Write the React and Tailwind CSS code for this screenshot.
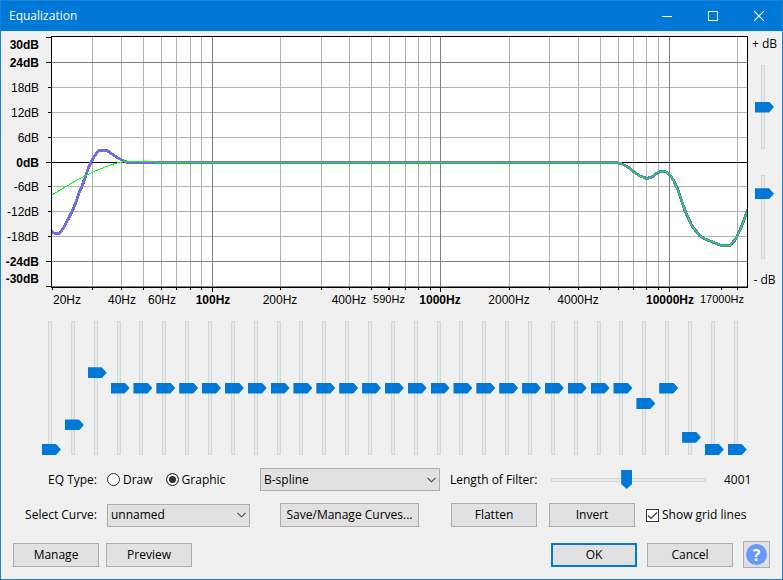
import { useState } from "react";

const BANDS = [
  20, 25, 31, 40, 50, 63, 80, 100, 125, 160, 200, 250, 315, 400, 500, 630, 800,
  1000, 1250, 1600, 2000, 2500, 3150, 4000, 5000, 6300, 8000, 10000, 12500,
  16000, 20000,
];
const GAINS = [
  -20, -12, 5, 0, 0, 0, 0, 0, 0, 0, 0, 0, 0, 0, 0, 0, 0, 0, 0, 0, 0, 0, 0, 0, 0,
  0, -5, 0, -16, -20, -20,
];

const V_LINES = [
  92, 121, 143, 161, 176, 190, 201, 280, 321, 349, 371, 389, 405, 418, 430, 509,
  549, 578, 600, 618, 633, 646, 658, 737,
];
const V_MAJOR = [212, 440, 669];
const H_LINES = [87, 112, 137, 186, 211, 236];
const H_MAJOR = [62, 261, 286];

const DB_LABELS = [
  { text: "30dB", y: 49, bold: true },
  { text: "24dB", y: 67, bold: true },
  { text: "18dB", y: 92 },
  { text: "12dB", y: 117 },
  { text: "6dB", y: 142 },
  { text: "0dB", y: 167, bold: true },
  { text: "-6dB", y: 191 },
  { text: "-12dB", y: 216 },
  { text: "-18dB", y: 241 },
  { text: "-24dB", y: 266, bold: true },
  { text: "-30dB", y: 283, bold: true },
];
const HZ_LABELS = [
  { text: "20Hz", x: 67 },
  { text: "40Hz", x: 122 },
  { text: "60Hz", x: 162 },
  { text: "100Hz", x: 213, bold: true },
  { text: "200Hz", x: 280 },
  { text: "400Hz", x: 349 },
  { text: "590Hz", x: 389, small: true },
  { text: "1000Hz", x: 440, bold: true },
  { text: "2000Hz", x: 509 },
  { text: "4000Hz", x: 578 },
  { text: "10000Hz", x: 670, bold: true },
  { text: "17000Hz", x: 722, small: true },
];

const HIGH_END =
  "614,162.5 618,163 622,164 628,167 634,172 640,176 647,178.5 652,177 658,172.5 662,171 666,172 670,175 674,181 678,190 682,202 686,213 692,226 696,231 700,236 705,239 710,241 715,243 720,245 725,246 730,245.5 735,240 740,230 744,220 748,209";
const SPLINE_LOW =
  "51,231 54,233 57,234 60,233 64,227 67,221 72,212 76,202 79,193 82,186 85,178 88,169 91,162 94,157 98,151 100,150.5 107,150.5 112,154 118,158 124,161 128,162.5";
const RESPONSE_LOW = "52,195 60,190 67,186 77,180 87,175 95,171 103,168 110,165 117,163 123,162";

function Chart() {
  return (
    <svg
      viewBox="1 31 747 278"
      className="block h-auto min-w-0 flex-1 font-['Liberation_Sans',Arial,sans-serif]"
      role="img"
      aria-label="Equalization curve"
    >
      <g shapeRendering="crispEdges">
        <rect x="51" y="36" width="697" height="252" fill="#fff" />
        {V_LINES.map((x) => (
          <rect key={x} x={x} y="37" width="1" height="250" fill="#b2b2b2" />
        ))}
        {H_LINES.map((y) => (
          <rect key={y} x="52" y={y} width="695" height="1" fill="#b2b2b2" />
        ))}
        {V_MAJOR.map((x) => (
          <rect key={x} x={x} y="37" width="1" height="250" fill="#7f7f7f" />
        ))}
        {H_MAJOR.map((y) => (
          <rect key={y} x="52" y={y} width="695" height="1" fill="#7f7f7f" />
        ))}
        <rect x="52" y="162" width="695" height="1" fill="#000" />
        <polyline points={SPLINE_LOW} fill="none" stroke="#6e6ede" strokeWidth="3" />
        <rect x="126" y="161" width="489" height="3" fill="#6e6ede" />
        <polyline points={HIGH_END} fill="none" stroke="#6e6ede" strokeWidth="3" />
        <polyline points={RESPONSE_LOW} fill="none" stroke="#00ff00" strokeWidth="1" />
        <rect x="123" y="161" width="31" height="1" fill="#00ff00" />
        <rect x="154" y="162" width="461" height="1" fill="#00ff00" />
        <polyline points={HIGH_END} fill="none" stroke="#00ff00" strokeWidth="1" />
        <path d="M51.5 36.5H747.5V287.5H51.5Z" fill="none" stroke="#000" />
        {[37, 62, 162, 261, 286].map((y) => (
          <rect key={y} x="46" y={y} width="5" height="1" />
        ))}
        {H_LINES.map((y) => (
          <rect key={y} x="48" y={y} width="3" height="1" />
        ))}
        {[52, 388, 721, ...V_LINES].map((x) => (
          <rect key={x} x={x} y="288" width="1" height="2" />
        ))}
        {V_MAJOR.map((x) => (
          <rect key={x} x={x} y="288" width="1" height="4" />
        ))}
      </g>
      {DB_LABELS.map((l) => (
        <text key={l.text} x="39" y={l.y} textAnchor="end" fontSize="12" fontWeight={l.bold ? 700 : 400}>
          {l.text}
        </text>
      ))}
      {HZ_LABELS.map((l) => (
        <text
          key={l.text}
          x={l.x}
          y={l.small ? 303 : 304}
          textAnchor="middle"
          fontSize={l.small ? 11 : 12}
          fontWeight={l.bold ? 700 : 400}
        >
          {l.text}
        </text>
      ))}
    </svg>
  );
}

function VSlider({ label, min, max, initial, tall }) {
  const [value, setValue] = useState(initial);
  return (
    <div className={`grid w-[19px] ${tall ? "h-[134px]" : "h-[84px]"}`}>
      <span className="col-start-1 row-start-1 ml-1.5 w-1 border border-[#d4d7d7] bg-[#e7eaea]" />
      <input
        type="range"
        aria-label={label}
        min={min}
        max={max}
        step="any"
        value={value}
        onChange={(e) => setValue(Number(e.target.value))}
        className={`col-start-1 row-start-1 m-0 w-[19px] appearance-none bg-transparent [direction:rtl] [writing-mode:vertical-lr] [&::-webkit-slider-thumb]:h-[11px] [&::-webkit-slider-thumb]:w-[19px] [&::-webkit-slider-thumb]:appearance-none [&::-webkit-slider-thumb]:bg-[#0078d7] [&::-webkit-slider-thumb]:[clip-path:polygon(0_0,14px_0,100%_50%,14px_100%,0_100%)] ${tall ? "h-[134px]" : "h-[84px]"}`}
      />
    </div>
  );
}

function Button({ children, className = "w-[86px]", primary }) {
  return (
    <button
      type="button"
      className={`h-6 bg-[#e1e1e1] text-center ${primary ? "border-2 border-[#0078d7]" : "border border-[#adadad]"} ${className}`}
    >
      {children}
    </button>
  );
}

function Select({ id, label, value, className }) {
  return (
    <div className={`grid items-center ${className}`}>
      <select
        id={id}
        aria-label={label}
        defaultValue={value}
        className="col-start-1 row-start-1 h-[23px] w-full appearance-none border border-[#adadad] bg-[#e1e1e1] pl-[3px]"
      >
        <option>{value}</option>
      </select>
      <svg viewBox="0 0 9 6" className="pointer-events-none col-start-1 row-start-1 mr-1 h-1.5 w-[9px] justify-self-end">
        <path d="M.5 .8 4.5 4.8 8.5 .8" fill="none" stroke="#444" strokeWidth="1.1" />
      </svg>
    </div>
  );
}

function Radio({ label, checked }) {
  return (
    <label className="flex items-center gap-[3px]">
      <input
        type="radio"
        name="eq-type"
        defaultChecked={checked}
        className="size-[13px] appearance-none rounded-full border border-[#333] bg-white checked:bg-[#333] checked:shadow-[inset_0_0_0_2px_#fff]"
      />
      {label}
    </label>
  );
}

export default function App() {
  const [length, setLength] = useState(4001);
  return (
    <div className="flex min-h-screen flex-col border border-[#1883d7] bg-[#f0f0f0] font-['Open_Sans','Segoe_UI',sans-serif] text-xs leading-4 text-black">
      <header className="flex h-[30px] items-center bg-[#0078d7] pl-2 text-white">
        <h1 className="flex-1">Equalization</h1>
        <button type="button" aria-label="Minimize" className="flex h-full w-[46px] items-center justify-center">
          <svg viewBox="0 0 10 10" className="size-2.5" shapeRendering="crispEdges">
            <path d="M0 5.5H10" stroke="#fff" />
          </svg>
        </button>
        <button type="button" aria-label="Maximize" className="flex h-full w-[46px] items-center justify-center">
          <svg viewBox="0 0 10 10" className="size-2.5" shapeRendering="crispEdges">
            <path d="M.5 .5H9.5V9.5H.5Z" fill="none" stroke="#fff" />
          </svg>
        </button>
        <button type="button" aria-label="Close" className="flex h-full w-[46px] items-center justify-center">
          <svg viewBox="0 0 10 10" className="size-2.5">
            <path d="M0 0 10 10M10 0 0 10" stroke="#fff" strokeWidth="1.1" />
          </svg>
        </button>
      </header>

      <main className="flex flex-1 flex-col">
        <section className="flex">
          <Chart />
          <div className="flex w-[34px] flex-col items-center gap-[13px] pt-[5px] pr-px">
            <span>+ dB</span>
            <div className="flex flex-col gap-[26px]">
              <VSlider label="Maximum dB" min={0} max={60} initial={30} />
              <VSlider label="Minimum dB" min={-120} max={-10} initial={-30} />
            </div>
            <span>- dB</span>
          </div>
        </section>

        <section className="mt-3 flex justify-between pr-[35px] pl-[41px]">
          {BANDS.map((hz, i) => (
            <VSlider key={hz} label={`${hz} Hz`} min={-20} max={20} initial={GAINS[i]} tall />
          ))}
        </section>

        <section className="mt-[13px] flex h-[23px] items-center">
          <span className="w-24 text-right">EQ Type:</span>
          <div className="ml-2.5 flex w-[153px] gap-[13px]">
            <Radio label="Draw" />
            <Radio label="Graphic" checked />
          </div>
          <Select label="Interpolation" value="B-spline" className="w-[180px]" />
          <label htmlFor="filter-length" className="ml-2.5 w-[101px] whitespace-nowrap">
            Length of Filter:
          </label>
          <div className="grid w-[155px] items-center">
            <span className="col-start-1 row-start-1 h-1 border border-[#d4d7d7] bg-[#e7eaea]" />
            <input
              id="filter-length"
              type="range"
              min="21"
              max="8191"
              step="10"
              value={length}
              onChange={(e) => setLength(Number(e.target.value))}
              className="col-start-1 row-start-1 m-0 h-[19px] w-full appearance-none bg-transparent [&::-webkit-slider-thumb]:h-[19px] [&::-webkit-slider-thumb]:w-[11px] [&::-webkit-slider-thumb]:appearance-none [&::-webkit-slider-thumb]:bg-[#0078d7] [&::-webkit-slider-thumb]:[clip-path:polygon(0_0,100%_0,100%_14px,50%_100%,0_14px)]"
            />
          </div>
          <output htmlFor="filter-length" className="ml-[18px]">
            {length}
          </output>
        </section>

        <section className="mt-3 flex h-6 items-center">
          <label htmlFor="curve" className="w-24 text-right">
            Select Curve:
          </label>
          <Select id="curve" label="Select Curve" value="unnamed" className="ml-2.5 w-[143px]" />
          <Button className="ml-[30px] w-[139px]">Save/Manage Curves...</Button>
          <div className="ml-8 flex gap-3">
            <Button>Flatten</Button>
            <Button>Invert</Button>
          </div>
          <label className="ml-[11px] flex items-center gap-[3px]">
            <span className="grid">
              <input
                type="checkbox"
                defaultChecked
                className="peer col-start-1 row-start-1 size-[13px] appearance-none border border-[#333] bg-white"
              />
              <svg
                viewBox="0 0 13 13"
                className="pointer-events-none invisible col-start-1 row-start-1 size-[13px] peer-checked:visible"
              >
                <path d="M2 6.5 5 9.5 11 3.5" fill="none" stroke="#333" strokeWidth="1.2" />
              </svg>
            </span>
            Show grid lines
          </label>
        </section>

        <footer className="mt-3.5 flex items-center justify-between pr-3 pb-[11px] pl-3">
          <div className="flex gap-[7px]">
            <Button>Manage</Button>
            <Button>Preview</Button>
          </div>
          <div className="flex items-center gap-2.5">
            <Button primary>OK</Button>
            <Button>Cancel</Button>
            <button
              type="button"
              aria-label="Help"
              className="flex size-[27px] items-center justify-center border border-[#adadad] bg-[#e1e1e1]"
            >
              <span className="flex size-[21px] items-center justify-center rounded-full bg-[#6699ff] text-base font-bold text-white">
                ?
              </span>
            </button>
          </div>
        </footer>
      </main>
    </div>
  );
}
